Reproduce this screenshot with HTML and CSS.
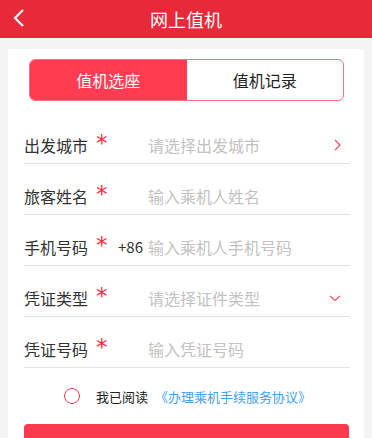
FILE: index.html
```html
<!DOCTYPE html>
<html lang="zh">
<head>
<meta charset="utf-8">
<link rel="stylesheet" href="styles.css">
</head>
<body>
<header class="topbar">
  <span class="back">
    <svg width="14" height="20" viewBox="0 0 14 20"><path d="M11 2 L3 10 L11 18" fill="none" stroke="#fff" stroke-width="2.2"/></svg>
  </span>
  <h1 class="title">网上值机</h1>
</header>
<main class="card">
  <div class="tabs">
    <div class="tab active">值机选座</div>
    <div class="tab">值机记录</div>
  </div>
  <div class="form">
    <div class="row">
      <span class="label">出发城市</span><span class="star">*</span><span class="prefix"></span>
      <span class="value">请选择出发城市</span>
      <svg class="icon" width="10" height="14" viewBox="0 0 10 14"><path d="M3 2 L8 7 L3 12" fill="none" stroke="#f5505f" stroke-width="1.3"/></svg>
    </div>
    <div class="row">
      <span class="label">旅客姓名</span><span class="star">*</span><span class="prefix"></span>
      <span class="value">输入乘机人姓名</span>
    </div>
    <div class="row">
      <span class="label">手机号码</span><span class="star">*</span><span class="prefix">+86</span>
      <span class="value">输入乘机人手机号码</span>
    </div>
    <div class="row">
      <span class="label">凭证类型</span><span class="star">*</span><span class="prefix"></span>
      <span class="value">请选择证件类型</span>
      <svg class="icon down" width="14" height="10" viewBox="0 0 14 10"><path d="M2 3 L7 7.5 L12 3" fill="none" stroke="#f5505f" stroke-width="1.2"/></svg>
    </div>
    <div class="row">
      <span class="label">凭证号码</span><span class="star">*</span><span class="prefix"></span>
      <span class="value">输入凭证号码</span>
    </div>
  </div>
  <div class="agree">
    <span class="check"></span>
    <span class="read">我已阅读</span>
    <span class="link">《办理乘机手续服务协议》</span>
  </div>
  <button class="submit">立即办理</button>
</main>
</body>
</html>
```
FILE: styles.css
```css
* { box-sizing: border-box; }
html, body { margin: 0; padding: 0; }
body {
  width: 372px;
  height: 438px;
  overflow: hidden;
  background: #f4f4f4;
  font-family: "Noto Sans CJK SC", "Noto Sans", sans-serif;
  color: #333;
}
.topbar {
  height: 38px;
  background: #e8293a;
  display: flex;
  align-items: center;
  justify-content: center;
  position: relative;
}
.back {
  position: absolute;
  left: 12px;
  top: 8px;
  display: flex;
}
.title {
  margin: 0;
  font-size: 18px;
  font-weight: normal;
  color: #fff;
  line-height: 38px;
}
.card {
  margin: 11px 8px 0;
  background: #fff;
  padding-top: 10px;
  height: 400px;
}
.tabs {
  margin: 0 20px 0 21px;
  height: 42px;
  border: 1px solid #ff6f7e;
  border-radius: 6px;
  display: flex;
  overflow: hidden;
}
.tab {
  flex: 1;
  display: flex;
  align-items: center;
  justify-content: center;
  font-size: 16px;
  color: #222;
}
.tab.active {
  background: #ff3c51;
  color: #fff;
}
.form {
  margin: 12px 14px 0 16px;
}
.row {
  height: 51px;
  border-bottom: 1px solid #e3e3e3;
  display: flex;
  align-items: center;
  padding-top: 13px;
  font-size: 16px;
}
.label {
  width: 72px;
  color: #333;
}
.star {
  width: 22px;
  color: #ff2b43;
  font-size: 23px;
  font-family: "DejaVu Sans", sans-serif;
  line-height: 1;
  position: relative;
  top: -1px;
}
.prefix {
  width: 30px;
  font-size: 15px;
  color: #333;
}
.value {
  flex: 1;
  color: #c2c2c2;
}
.icon {
  margin-right: 8px;
}
.agree {
  display: flex;
  align-items: center;
  height: 56px;
  padding-left: 56px;
  font-size: 13px;
}
.check {
  width: 16px;
  height: 16px;
  border: 1.5px solid #f33a4d;
  border-radius: 50%;
  margin-right: 16px;
}
.read {
  color: #222;
  margin-right: 7px;
}
.link {
  color: #3f9ff0;
}
.submit {
  display: block;
  margin: 0 15px 0 16px;
  width: 325px;
  height: 44px;
  border: none;
  border-radius: 4px;
  background: #fc3a4f;
  color: #fff;
  font-family: inherit;
  font-size: 17px;
}
```
